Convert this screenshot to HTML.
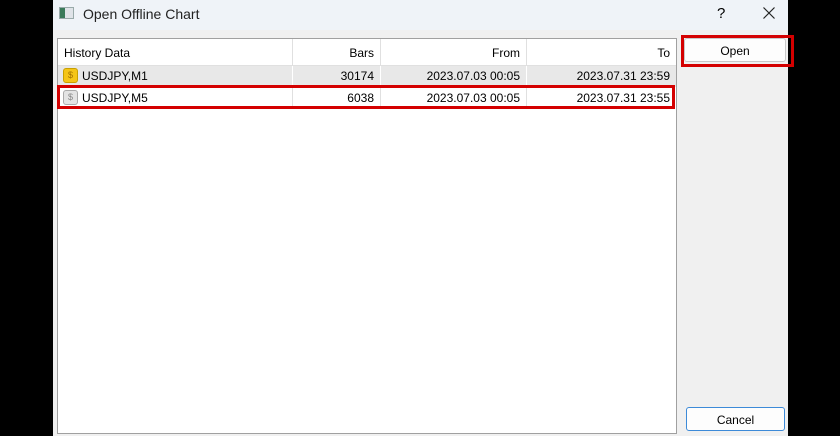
<!DOCTYPE html>
<html><head><style>
*{margin:0;padding:0;box-sizing:border-box}
body{width:840px;height:436px;background:#000;position:relative;overflow:hidden;font-family:"Liberation Sans",sans-serif;font-size:12px;color:#000}
.win{position:absolute;left:53px;top:0;width:735px;height:436px;background:#f0f0f0}
.title{position:absolute;left:0;top:0;width:735px;height:30px;background:#eff3f8}
.abs{position:absolute}
.list{position:absolute;left:4px;top:38px;width:620px;height:396px;background:#fff;border:1px solid #a0a0a0}
.cell{position:absolute;height:100%;padding:0 6px;line-height:inherit;white-space:nowrap}
.row{position:absolute;left:0;width:618px}
.btn{position:absolute;background:#fdfdfd;border:1px solid #c8c8c8;border-radius:3px;text-align:center}
</style></head><body>
<div class="win">
<div class="title">
 <div class="abs" style="left:6px;top:7px;width:15px;height:12px;background:#dfe3e8;border:1px solid #9aa"><div style="width:5px;height:10px;background:#3a7a5a"></div></div>
 <div class="abs" style="left:30px;top:6px;font-size:14px;color:#222">Open Offline Chart</div>
 <div class="abs" style="left:664px;top:5px;font-size:15px">?</div>
 <svg class="abs" style="left:710px;top:7px" width="12" height="12" viewBox="0 0 12 12"><path d="M0.5 0.5L11.5 11.5M11.5 0.5L0.5 11.5" stroke="#222" stroke-width="1.2"/></svg>
</div>
<div class="list">
 <div class="row" style="top:0;height:27px;line-height:28px;border-bottom:1px solid #e0e0e0">
  <div class="cell" style="left:0;width:235px;border-right:1px solid #e0e0e0">History Data</div>
  <div class="cell" style="left:235px;width:88px;text-align:right;border-right:1px solid #e0e0e0">Bars</div>
  <div class="cell" style="left:323px;width:146px;text-align:right;border-right:1px solid #e0e0e0">From</div>
  <div class="cell" style="left:469px;width:149px;text-align:right">To</div>
 </div>
 <div class="row" style="top:27px;height:21px;line-height:21px;background:#e8e8e8">
  <div class="cell" style="left:0;width:235px;padding-left:24px;border-right:1px solid #fff"><span class="abs" style="left:5px;top:2px;width:15px;height:15px;border-radius:3px;background:#f5c518;border:1px solid #c9a000;font-size:9px;line-height:13px;text-align:center;color:#a07000">$</span>USDJPY,M1</div>
  <div class="cell" style="left:235px;width:88px;text-align:right;border-right:1px solid #fff">30174</div>
  <div class="cell" style="left:323px;width:146px;text-align:right;border-right:1px solid #fff">2023.07.03 00:05</div>
  <div class="cell" style="left:469px;width:149px;text-align:right">2023.07.31 23:59</div>
 </div>
 <div class="row" style="top:48px;height:21px;line-height:22px">
  <div class="cell" style="left:0;width:235px;padding-left:24px;border-right:1px solid #e0e0e0"><span class="abs" style="left:5px;top:3px;width:15px;height:15px;border-radius:3px;background:#e4e4e4;border:1px solid #aaa;font-size:9px;line-height:13px;text-align:center;color:#888">$</span>USDJPY,M5</div>
  <div class="cell" style="left:235px;width:88px;text-align:right;border-right:1px solid #e0e0e0">6038</div>
  <div class="cell" style="left:323px;width:146px;text-align:right;border-right:1px solid #e0e0e0">2023.07.03 00:05</div>
  <div class="cell" style="left:469px;width:149px;text-align:right">2023.07.31 23:55</div>
 </div>
</div>
<div class="abs" style="left:4px;top:85px;width:618px;height:24px;border:3px solid #d40000"></div>
<div class="btn" style="left:631px;top:38px;width:102px;height:24px;line-height:24px">Open</div>
<div class="abs" style="left:628px;top:35px;width:113px;height:32px;border:3px solid #d40000"></div>
<div class="btn" style="left:633px;top:407px;width:99px;height:24px;line-height:24px;border:1px solid #3c8ad8">Cancel</div>
</div>
</body></html>
